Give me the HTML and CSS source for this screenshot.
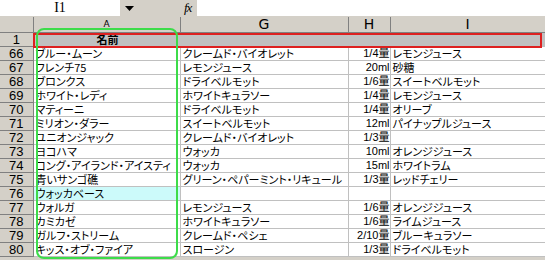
FILE: index.html
```html
<!DOCTYPE html>
<html lang="ja">
<head>
<meta charset="utf-8">
<link rel="stylesheet" href="styles.css">
</head>
<body>
<div class="app">
  <div class="fbar">
    <div class="namebox">I1</div>
    <div class="drop"><svg width="9" height="5" viewBox="0 0 9 5"><path d="M0 0H9L4.5 5Z" fill="#000"/></svg></div>
    <div class="fx">fx</div>
    <div class="finput"></div>
  </div>
  <table class="sheet">
    <colgroup><col class="c0"><col class="ca"><col class="cg"><col class="ch"><col class="ci"></colgroup>
    <thead>
      <tr class="colhead"><th class="corner"></th><th>A</th><th>G</th><th>H</th><th>I</th></tr>
    </thead>
    <tbody>
      <tr class="r1"><th>1</th><td class="name">名前</td><td></td><td></td><td></td></tr>
      <tr><th>66</th><td>ブルー・ムーン</td><td>クレームド・バイオレット</td><td class="q">1/4量</td><td>レモンジュース</td></tr>
      <tr><th>67</th><td>フレンチ75</td><td>レモンジュース</td><td class="q">20ml</td><td>砂糖</td></tr>
      <tr><th>68</th><td>ブロンクス</td><td>ドライベルモット</td><td class="q">1/6量</td><td>スイートベルモット</td></tr>
      <tr><th>69</th><td>ホワイト・レディ</td><td>ホワイトキュラソー</td><td class="q">1/4量</td><td>レモンジュース</td></tr>
      <tr><th>70</th><td>マティーニ</td><td>ドライベルモット</td><td class="q">1/4量</td><td>オリーブ</td></tr>
      <tr><th>71</th><td>ミリオン・ダラー</td><td>スイートベルモット</td><td class="q">12ml</td><td>パイナップルジュース</td></tr>
      <tr><th>72</th><td>ユニオンジャック</td><td>クレームド・バイオレット</td><td class="q">1/3量</td><td></td></tr>
      <tr><th>73</th><td>ヨコハマ</td><td>ウォッカ</td><td class="q">10ml</td><td>オレンジジュース</td></tr>
      <tr><th>74</th><td>コング・アイランド・アイスティ</td><td>ウォッカ</td><td class="q">15ml</td><td>ホワイトラム</td></tr>
      <tr><th>75</th><td>青いサンゴ礁</td><td>グリーン・ペパーミント・リキュール</td><td class="q">1/3量</td><td>レッドチェリー</td></tr>
      <tr><th>76</th><td class="cyan">ウォッカベース</td><td></td><td></td><td></td></tr>
      <tr><th>77</th><td>ウォルガ</td><td>レモンジュース</td><td class="q">1/6量</td><td>オレンジジュース</td></tr>
      <tr><th>78</th><td>カミカゼ</td><td>ホワイトキュラソー</td><td class="q">1/6量</td><td>ライムジュース</td></tr>
      <tr><th>79</th><td>ガルフ・ストリーム</td><td>クレームド・ペシェ</td><td class="q">2/10量</td><td>ブルーキュラソー</td></tr>
      <tr><th>80</th><td>キッス・オブ・ファイア</td><td>スロージン</td><td class="q">1/3量</td><td>ドライベルモット</td></tr>
    </tbody>
  </table>
  <div class="mark-red"></div>
  <div class="mark-green"></div>
</div>
</body>
</html>
```
FILE: styles.css
```css
html, body { margin: 0; padding: 0; background: #d4d0c8; }
body { width: 545px; height: 260px; overflow: hidden; font-family: "Noto Sans CJK JP", sans-serif; }
.app { position: relative; width: 545px; height: 260px; overflow: hidden; }
.fbar { display: flex; height: 17px; align-items: stretch; background: #d4d0c8; }
.namebox { width: 120px; background: #fff; font: 14px "Liberation Serif", serif; text-align: center; line-height: 16px; height: 16px; }
.drop { width: 18px; display: flex; align-items: center; justify-content: center; }
.fx { margin-left: 46px; width: 13px; font: italic 13px "Liberation Serif", serif; line-height: 15px; letter-spacing: -1px; }
.finput { flex: 1; background: #fff; height: 16px; }
.sheet { border-collapse: collapse; table-layout: fixed; width: 545px; background: #fff; }
.c0 { width: 33px; } .ca { width: 147px; } .cg { width: 168px; } .ch { width: 42px; } .ci { width: 155px; }
.sheet th, .sheet td { padding: 0; height: 13px; line-height: 13px; white-space: nowrap; overflow: hidden; }
.sheet td { border: 1px solid #c0c0c0; font-size: 11px; font-feature-settings: "palt"; padding-left: 2px; color: #000; }
.sheet tbody th { background: #d4d0c8; border: 1px solid #808080; border-left: none; font: 13px "Liberation Sans", sans-serif; line-height: 13px; font-weight: normal; color: #000; text-align: center; }
.colhead th { height: 15px; background: #d4d0c8; border: 1px solid #808080; border-top: none; font: 14px "DejaVu Sans", sans-serif; font-weight: normal; text-align: center; line-height: 15px; }
.colhead th:nth-child(2) { font-size: 9px; vertical-align: bottom; }
.colhead th.corner { border-left: none; }
.r1 td { background: #c0c0c0; }
.name { font-weight: bold; text-align: center; }
.q { text-align: right; padding-right: 2px; font-family: "Liberation Sans", "Noto Sans CJK JP", sans-serif; font-size: 12px; line-height: 13px; }
.cyan { background: #ccfafa; }
.mark-red { position: absolute; left: 33px; top: 33px; width: 505px; height: 11px; border: 2px solid #dd2020; }
.mark-green { position: absolute; left: 36px; top: 28px; width: 138px; height: 227px; border: 2px solid #3ddc4a; border-radius: 8px; }
```
